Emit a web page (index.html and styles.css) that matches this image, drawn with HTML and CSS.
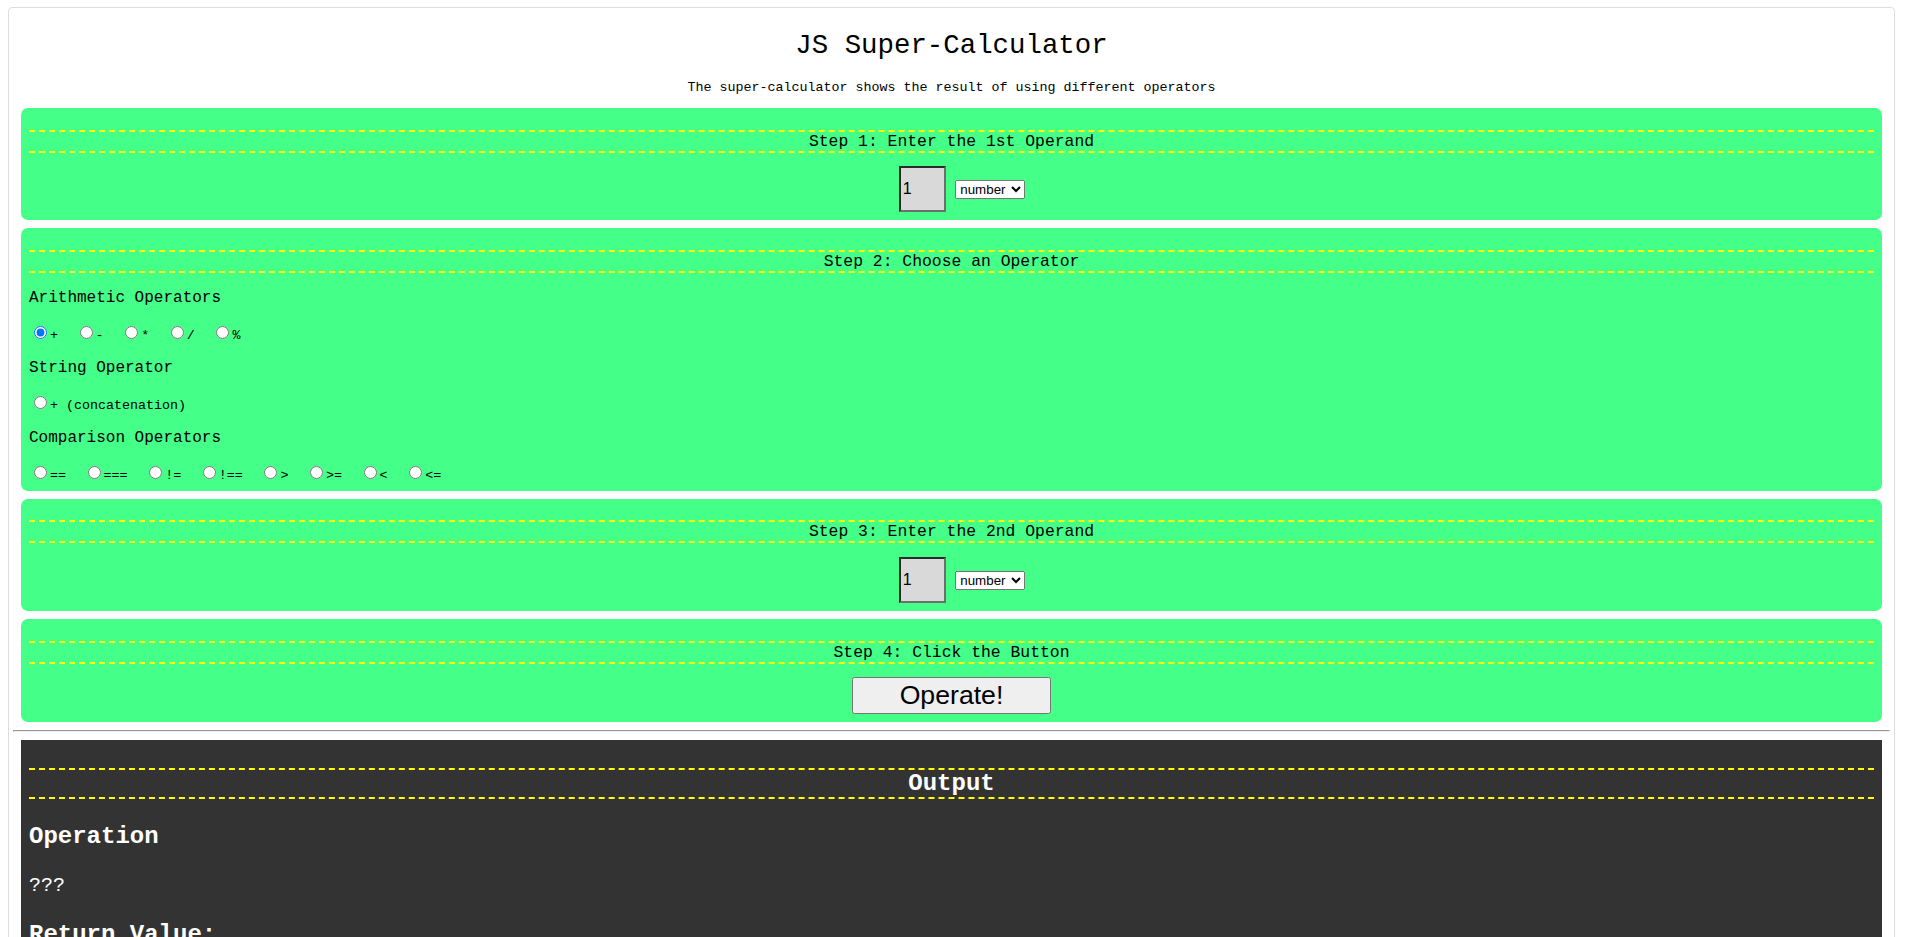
FILE: index.html
```html
<!DOCTYPE html>
<html lang="en">
<head>
<meta charset="utf-8">
<title>JS Super-Calculator</title>
<link rel="stylesheet" href="styles.css">
</head>
<body>
<div class="calc">
  <h1 class="title">JS Super-Calculator</h1>
  <p class="subtitle">The super-calculator shows the result of using different operators</p>

  <section class="step">
    <h2 class="step-head">Step 1: Enter the 1st Operand</h2>
    <div class="operand"><input class="num" type="text" value="1"> <select class="type"><option>number</option><option>string</option><option>boolean</option></select></div>
  </section>

  <section class="step">
    <h2 class="step-head">Step 2: Choose an Operator</h2>
    <p class="group">Arithmetic Operators</p>
    <div class="ops"><label class="opt"><input type="radio" name="op" checked>+</label><label class="opt"><input type="radio" name="op">-</label><label class="opt"><input type="radio" name="op">*</label><label class="opt"><input type="radio" name="op">/</label><label class="opt"><input type="radio" name="op">%</label></div>
    <p class="group">String Operator</p>
    <div class="ops"><label class="opt"><input type="radio" name="op">+ (concatenation)</label></div>
    <p class="group">Comparison Operators</p>
    <div class="ops"><label class="opt"><input type="radio" name="op">==</label><label class="opt"><input type="radio" name="op">===</label><label class="opt"><input type="radio" name="op">!=</label><label class="opt"><input type="radio" name="op">!==</label><label class="opt"><input type="radio" name="op">&gt;</label><label class="opt"><input type="radio" name="op">&gt;=</label><label class="opt"><input type="radio" name="op">&lt;</label><label class="opt"><input type="radio" name="op">&lt;=</label></div>
  </section>

  <section class="step">
    <h2 class="step-head">Step 3: Enter the 2nd Operand</h2>
    <div class="operand"><input class="num" type="text" value="1"> <select class="type"><option>number</option><option>string</option><option>boolean</option></select></div>
  </section>

  <section class="step">
    <h2 class="step-head">Step 4: Click the Button</h2>
    <div class="action"><button class="operate" type="button">Operate!</button></div>
  </section>

  <hr class="divider">

  <section class="output">
    <h2 class="out-head">Output</h2>
    <h3 class="out-label">Operation</h3>
    <p class="out-value">???</p>
    <h3 class="out-label">Return Value:</h3>
    <p class="out-value">???</p>
  </section>
</div>
</body>
</html>
```

FILE: styles.css
```css
body {
  margin: 7px 10px 8px 8px;
  font-family: "Liberation Mono", "Courier New", monospace;
  font-size: 16px;
  color: #000;
  background: #fff;
}

.calc {
  border: 1px solid #dddddd;
  border-radius: 4px;
  padding: 4px;
}

.title {
  font-size: 27.4px;
  font-weight: normal;
  text-align: center;
  margin: 0.67em 0;
}

.subtitle {
  font-size: 13.33px;
  text-align: center;
  margin: 13.33px 0;
}

.step {
  background: #44ff88;
  border-radius: 7px;
  margin: 8px;
  padding: 8px;
}

.step-head {
  font-size: 16.4px;
  font-weight: normal;
  text-align: center;
  margin: 0.83em 0;
  border-top: 2px dashed #ffff00;
  border-bottom: 2px dashed #ffff00;
}

.operand {
  text-align: center;
}

.num {
  box-sizing: border-box;
  width: 47px;
  height: 46px;
  margin: 0 0 0 21px;
  padding: 1px 2px;
  font: 16px "Liberation Sans", Arial, sans-serif;
  color: #000;
  background: #d9d9d9;
  border-style: solid;
  border-width: 2px;
  border-color: #2b2b2b #6e6e6e #6e6e6e #2b2b2b;
}

.type {
  font: 13.33px "Liberation Sans", Arial, sans-serif;
}

.group {
  margin: 16px 0;
}

.ops {
  font-size: 13.33px;
}

.opt {
  margin-right: 16.6px;
}

.opt input {
  margin: 3px 3px 0 5px;
}

.action {
  text-align: center;
}

.operate {
  width: 199px;
  font: 26.67px "Liberation Sans", Arial, sans-serif;
}

.divider {
  margin: 8px 0;
}

.output {
  background: #333333;
  color: #ffffff;
  margin: 8px;
  padding: 8px;
}

.out-head {
  font-size: 24px;
  font-weight: bold;
  text-align: center;
  margin: 0.83em 0;
  border-top: 2px dashed #ffff00;
  border-bottom: 2px dashed #ffff00;
}

.out-label {
  font-size: 24px;
  font-weight: bold;
  margin: 1em 0;
}

.out-value {
  font-size: 20px;
  margin: 1em 0;
}
```
